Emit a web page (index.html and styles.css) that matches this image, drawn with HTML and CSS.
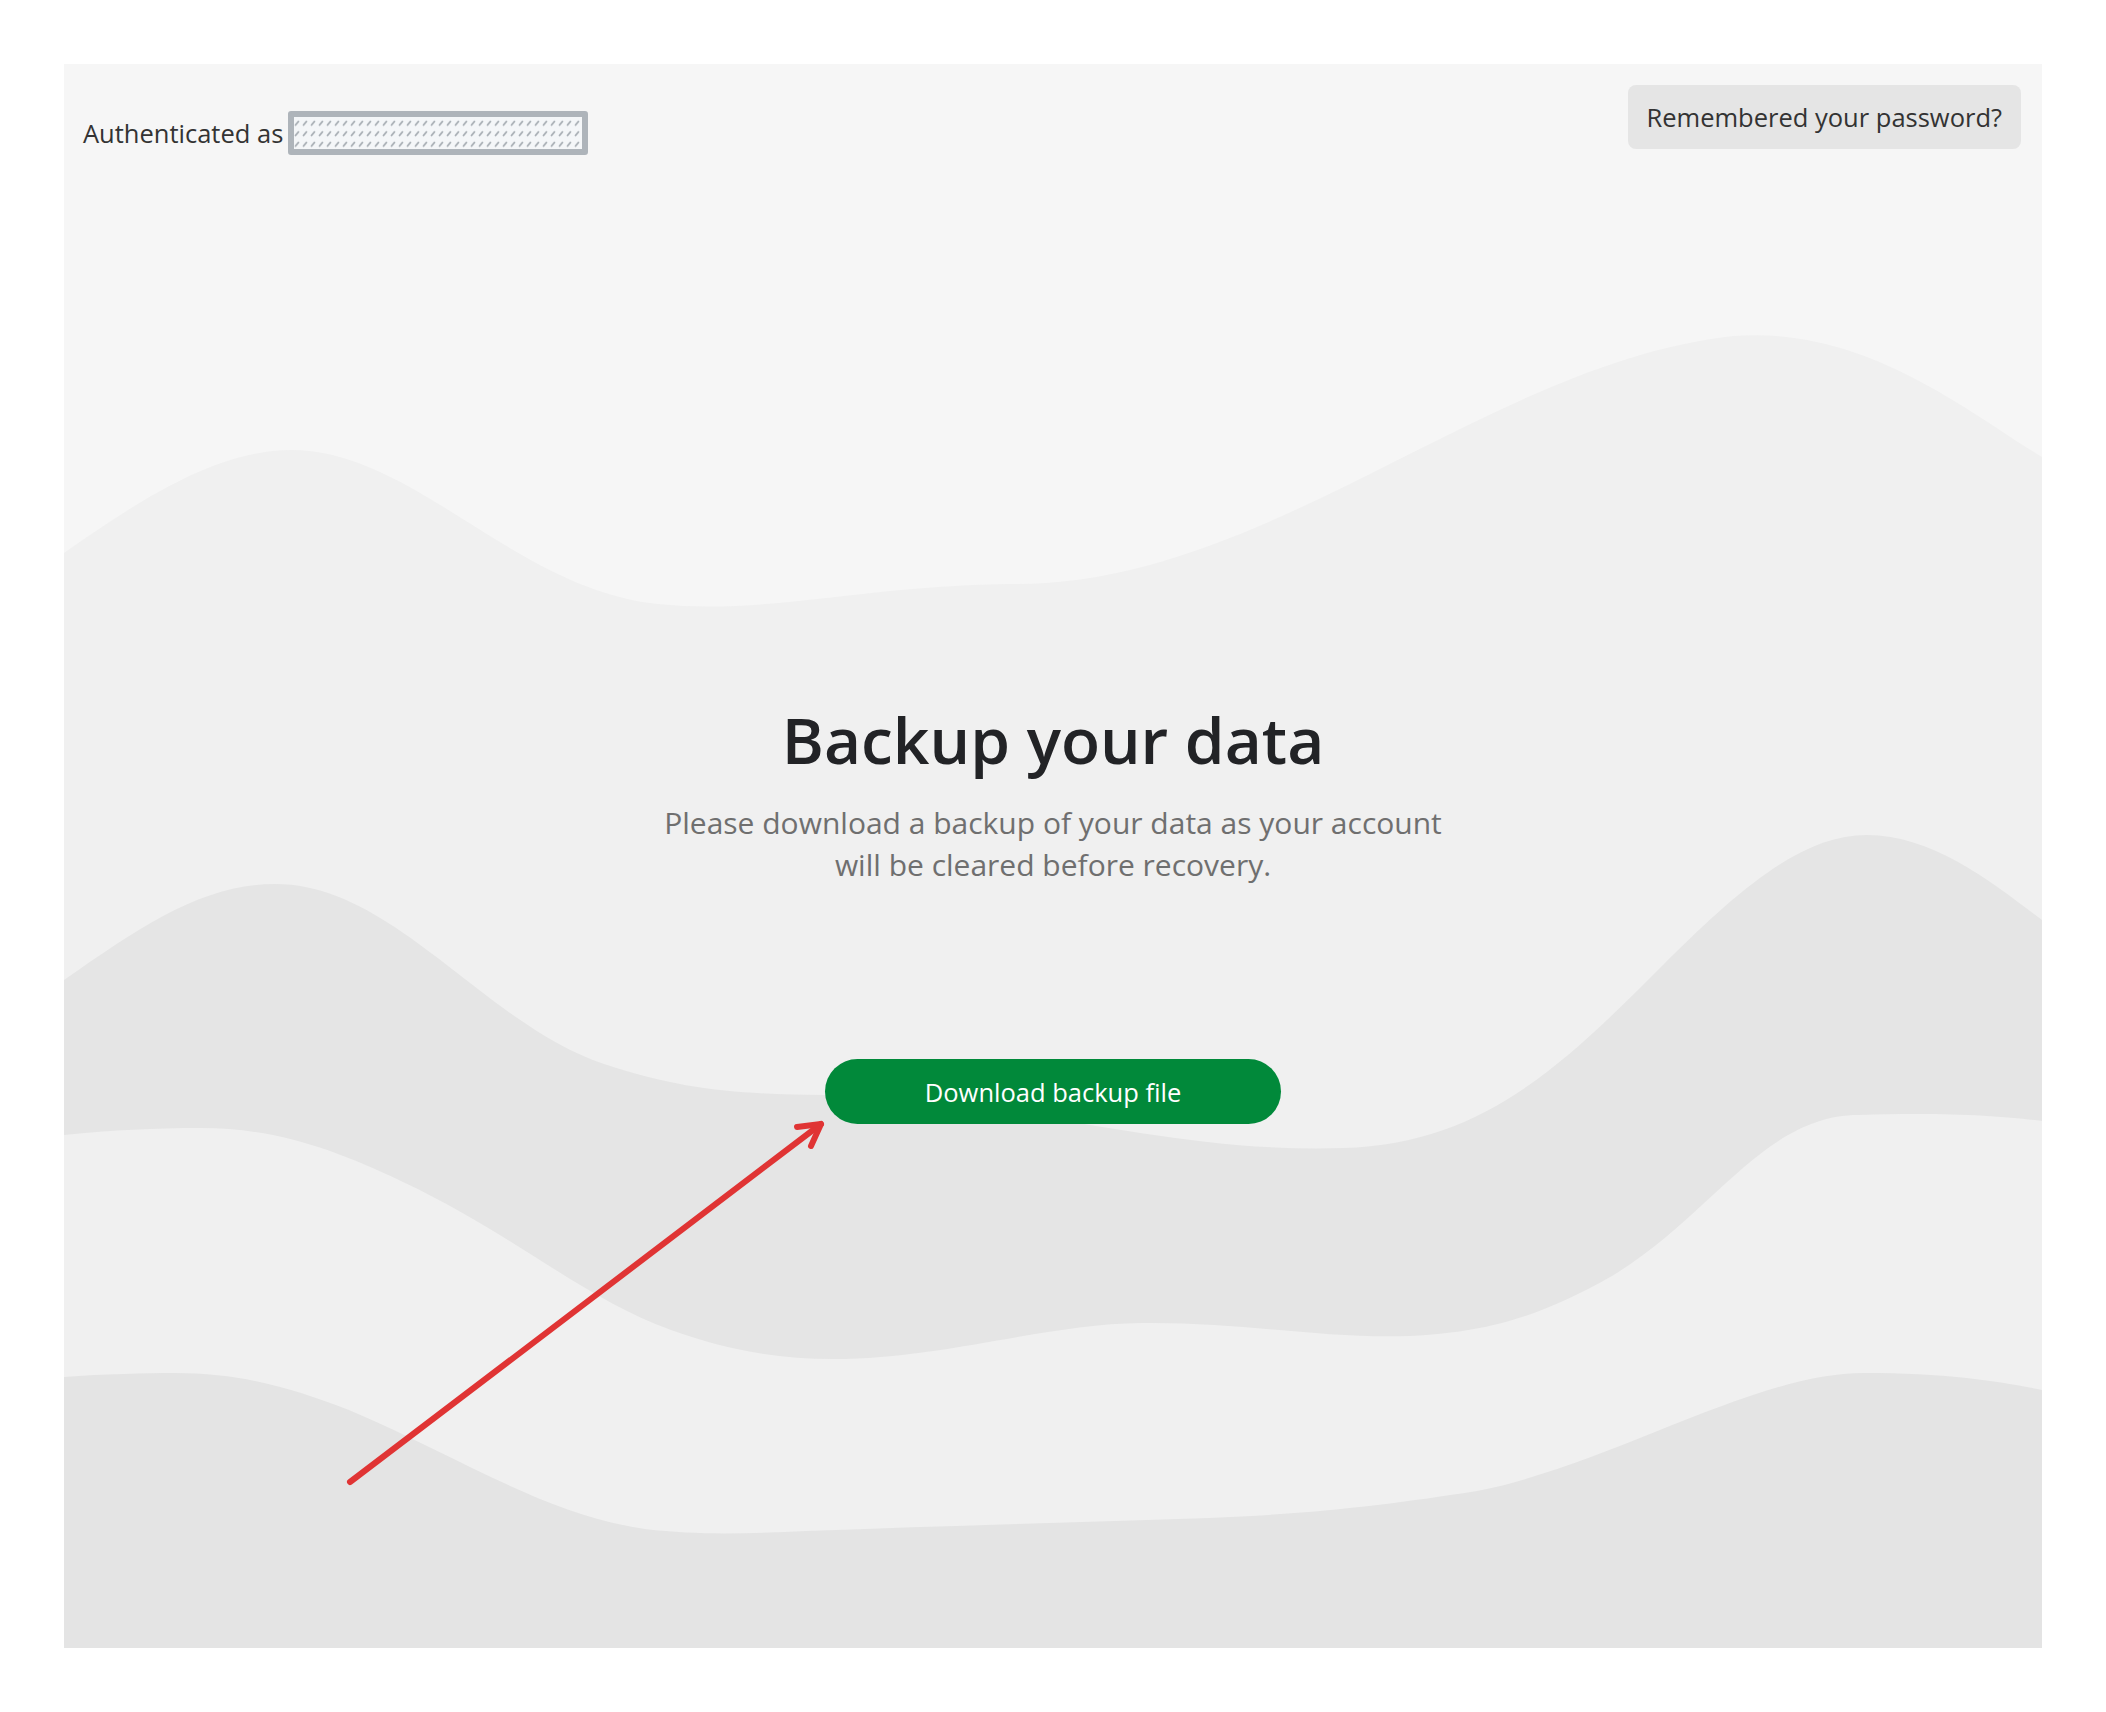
FILE: index.html
```html
<!DOCTYPE html>
<html lang="en">
<head>
<meta charset="utf-8">
<title>Backup your data</title>
<link rel="stylesheet" href="styles.css">
</head>
<body>
<div class="frame">
  <svg class="waves" viewBox="0 0 1978 1584" preserveAspectRatio="none" aria-hidden="true">
    <path class="w1" d="M0,489 C70,440 150,386 227,386 C350,386 450,525 594,540 C700,551 800,522 943,520 C1200,525 1420,300 1669,272 C1800,262 1900,345 1978,393 V1584 H0 Z"/>
    <path class="w2" d="M0,916 C80,860 140,820 211,820 C330,820 420,960 540,1000 C620,1027 680,1030 760,1031 C950,1033 1100,1090 1279,1084 C1420,1080 1500,1000 1600,900 C1680,820 1740,771 1803,771 C1870,771 1930,820 1978,856 V1584 H0 Z"/>
    <path class="w3" d="M0,1071 C50,1066 90,1064 137,1064 C210,1064 270,1085 339,1118 C450,1170 520,1235 607,1266 C660,1285 710,1295 769,1295 C880,1295 980,1260 1078,1259 C1180,1258 1260,1275 1346,1272 C1430,1268 1480,1250 1548,1212 C1650,1150 1700,1051 1795,1051 C1880,1048 1940,1052 1978,1057 V1584 H0 Z"/>
    <path class="w4" d="M0,1313 C40,1310 80,1309 111,1309 C180,1309 230,1325 285,1346 C400,1395 480,1450 581,1465 C640,1472 690,1469 742,1467 C880,1462 1020,1458 1145,1454 C1250,1450 1330,1440 1413,1427 C1550,1400 1690,1309 1800,1309 C1885,1309 1940,1318 1978,1326 V1584 H0 Z"/>
  </svg>

  <header class="topbar">
    <div class="auth">
      <span class="auth-label">Authenticated as</span>
      <span class="redacted">
        <svg class="hatch" width="288" height="32" aria-hidden="true">
          <defs>
            <pattern id="dash" width="8" height="10.5" patternUnits="userSpaceOnUse">
              <line x1="1.5" y1="8" x2="4.5" y2="4.5" />
            </pattern>
          </defs>
          <rect width="288" height="32" fill="url(#dash)"/>
        </svg>
      </span>
    </div>
    <button class="remember" type="button">Remembered your password?</button>
  </header>

  <main class="content">
    <h1 class="title">Backup your data</h1>
    <p class="subtitle">Please download a backup of your data as your account will be cleared before recovery.</p>
    <button class="download" type="button">Download backup file</button>
  </main>
</div>

<svg class="annotation" width="2106" height="1712" viewBox="0 0 2106 1712" aria-hidden="true">
  <g class="arrow">
    <line x1="350" y1="1482" x2="821" y2="1124"/>
    <polyline points="797,1127 821,1124 811,1146"/>
  </g>
</svg>
</body>
</html>
```

FILE: styles.css
```css
* {
  box-sizing: border-box;
}

html, body {
  margin: 0;
  padding: 0;
  background: #ffffff;
}

body {
  position: relative;
  width: 2106px;
  height: 1712px;
  padding: 64px 0 0 64px;
  font-family: "Open Sans", "Noto Sans", "Liberation Sans", sans-serif;
  color: #333333;
}

.frame {
  position: relative;
  width: 1978px;
  height: 1584px;
  background: #f6f6f6;
  overflow: hidden;
}

.waves {
  position: absolute;
  left: 0;
  top: 0;
  width: 100%;
  height: 100%;
}

.w1 { fill: #f0f0f0; }
.w2 { fill: #e5e5e5; }
.w3 { fill: #f0f0f0; }
.w4 { fill: #e4e4e4; }

.topbar {
  position: relative;
  display: flex;
  justify-content: space-between;
  align-items: flex-start;
  padding: 21px 21px 0 19px;
}

.auth {
  display: flex;
  align-items: center;
  margin-top: 26px;
}

.auth-label {
  font-size: 25.5px;
  line-height: 34px;
  color: #333333;
  margin-right: 5px;
}

.redacted {
  display: block;
  width: 300px;
  height: 44px;
  border: 6px solid #aeb4ba;
  border-radius: 3px;
  background: #f4f6f8;
}

.hatch {
  display: block;
}

.hatch line {
  stroke: #aab0b6;
  stroke-width: 1.8;
  stroke-linecap: round;
}

.remember {
  font-family: inherit;
  font-size: 25.5px;
  line-height: 34px;
  color: #333333;
  background: #e5e5e5;
  border: none;
  border-radius: 8px;
  padding: 15px 19px;
  height: 64px;
  cursor: pointer;
}

.content {
  position: relative;
  display: flex;
  flex-direction: column;
  align-items: center;
  padding-top: 541px;
}

.title {
  margin: 0;
  font-size: 64px;
  font-weight: 600;
  line-height: 87px;
  color: #222326;
}

.subtitle {
  margin: 19px 0 0;
  max-width: 810px;
  font-size: 30px;
  line-height: 42px;
  text-align: center;
  color: #6f6f6f;
}

.download {
  margin-top: 173px;
  width: 456px;
  height: 65px;
  border: none;
  border-radius: 33px;
  background: #01893a;
  color: #ffffff;
  font-family: inherit;
  font-size: 25.5px;
  cursor: pointer;
}

.annotation {
  position: absolute;
  left: 0;
  top: 0;
  pointer-events: none;
}

.arrow line,
.arrow polyline {
  fill: none;
  stroke: #e03434;
  stroke-width: 6;
  stroke-linecap: round;
  stroke-linejoin: round;
}
```
